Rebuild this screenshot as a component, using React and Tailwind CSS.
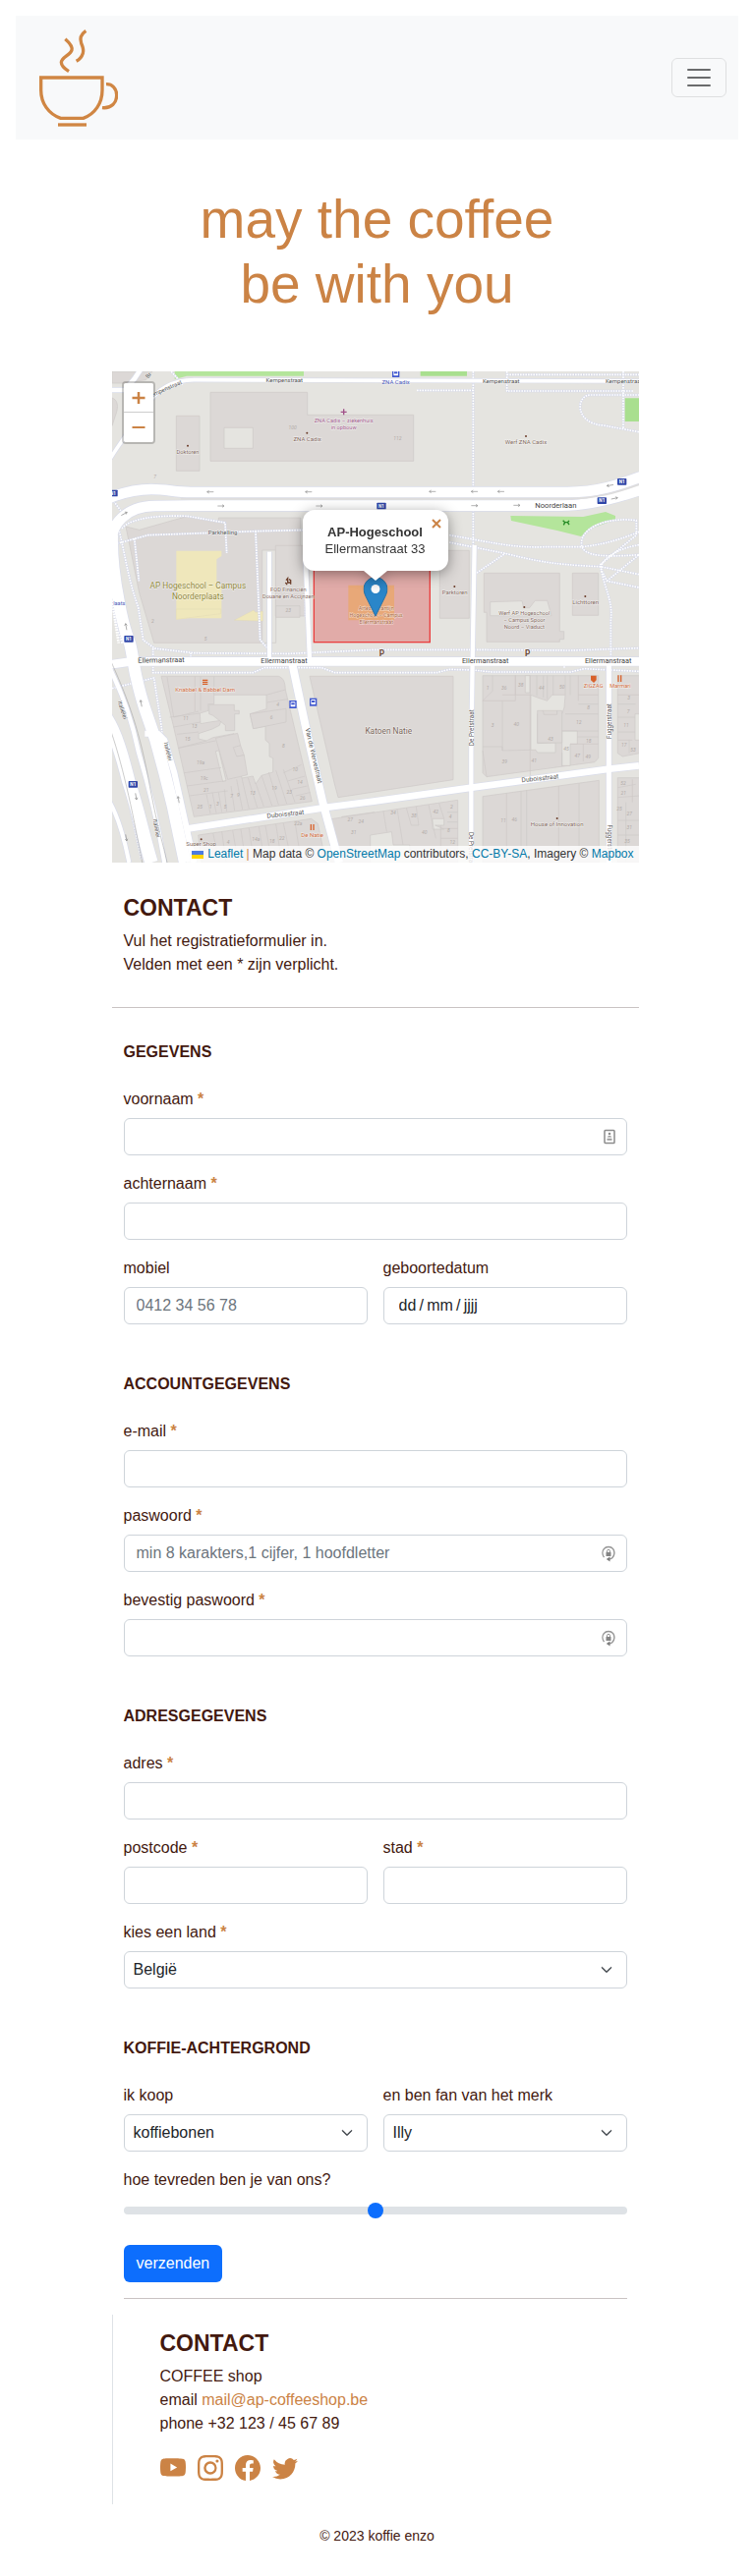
import React from "react";
import { BsYoutube, BsInstagram, BsFacebook, BsTwitter, BsChevronDown } from "react-icons/bs";

/* ---------- map drawing ---------- */

function Roads({ items }) {
  return (
    <g fill="none" strokeLinejoin="round">
      {items.map(([d, w]) => (
        <path key={"c" + d} d={d} stroke="#d9dcea" strokeWidth={w + 4} />
      ))}
      {items.map(([d, w]) => (
        <path key={d} d={d} stroke="#ffffff" strokeWidth={w} />
      ))}
    </g>
  );
}

function Paths({ items }) {
  return (
    <g fill="none" strokeLinejoin="round">
      {items.map((d) => (
        <path key={"b" + d} d={d} stroke="#d5d8e8" strokeWidth="7" />
      ))}
      {items.map((d) => (
        <path key={d} d={d} stroke="#ffffff" strokeWidth="5" strokeDasharray="5 3" />
      ))}
    </g>
  );
}

function Label({ x, y, size = 18, fill = "#836a5f", rotate = 0, anchor = "middle", weight = 400, children }) {
  return (
    <text
      x={x}
      y={y}
      fontSize={size}
      fill={fill}
      fontWeight={weight}
      textAnchor={anchor}
      transform={rotate ? `rotate(${rotate} ${x} ${y})` : undefined}
      stroke="#ffffff"
      strokeOpacity="0.6"
      strokeWidth="3"
      paintOrder="stroke"
    >
      {children}
    </text>
  );
}

function Badge({ x, y }) {
  return (
    <g>
      <rect x={x - 14} y={y - 10} width="28" height="20" rx="2" fill="#2f45a8" />
      <text x={x} y={y + 5} fontSize="14" fontWeight="700" fill="#ffffff" textAnchor="middle">N1</text>
    </g>
  );
}

function Arrow({ x, y, r = 0 }) {
  return (
    <path
      d="M-10 0H10M4 -4L10 0L4 4"
      transform={`translate(${x} ${y}) rotate(${r})`}
      fill="none"
      stroke="#8d8d8d"
      strokeWidth="2"
    />
  );
}

function Bus({ x, y }) {
  return (
    <g transform={`translate(${x} ${y})`}>
      <rect x="-11" y="-12" width="22" height="24" fill="#4159d0" />
      <rect x="-7" y="-8" width="14" height="15" rx="2" fill="#ffffff" />
      <rect x="-5" y="-5" width="10" height="6" fill="#4159d0" />
    </g>
  );
}

const houseNumbers = [
  [237, 334, "11"], [263, 358, "13"], [242, 398, "15"], [282, 470, "19a"], [293, 517, "19c"], [299, 553, "21"],
  [280, 605, "25"], [312, 603, "1"], [334, 596, "3"], [357, 604, "5"], [377, 572, "7"], [397, 567, "9"],
  [441, 562, "13"], [507, 548, "19"], [553, 560, "23"], [571, 490, "10"], [585, 528, "14"], [593, 576, "26"],
  [518, 292, "4"], [498, 332, "6"], [535, 417, "8"], [136, 38, "2"], [297, 92, "5"], [550, 5, "23"],
  [366, 712, "4"], [451, 704, "14a"], [500, 708, "18"], [530, 700, "22"], [580, 656, "22a"], [739, 642, "27"],
  [772, 650, "24"], [749, 682, "31"],
];

const houseNumbersEast = [
  [348, 242, "1"], [398, 242, "36"], [449, 232, "38"], [512, 240, "44"], [575, 238, "50"], [363, 356, "3"],
  [436, 352, "40"], [540, 398, "43"], [588, 426, "45"], [400, 466, "39"], [490, 463, "41"], [656, 302, "8"],
  [626, 347, "12"], [656, 402, "18"], [622, 447, "47"], [655, 450, "49"], [779, 270, "3"], [777, 312, "7"],
  [771, 356, "11"], [764, 416, "17"], [792, 430, "53"], [60, 622, "34"], [123, 632, "38"], [190, 620, "42"],
  [155, 682, "40"], [238, 604, "2"], [234, 635, "4"], [229, 676, "8"], [241, 713, "12"], [396, 645, "11"],
  [430, 643, "46"], [762, 532, "52"], [763, 562, "21"], [750, 610, "25"], [781, 625, "27"], [781, 668, "31"],
  [774, 708, "35"],
];

function MapTiles() {
  return (
    <svg
      viewBox="0 0 1608 1500"
      preserveAspectRatio="xMidYMid slice"
      className="block h-full w-full"
      fontFamily='Roboto, "Liberation Sans", sans-serif'
      role="img"
      aria-label="Kaart van de Ellermanstraat"
    >
      <rect width="1608" height="1500" fill="#e5e4e0" />

      {/* north west */}
      <g transform="translate(-12 -24)">
        <path d="M12 24H135L115 50L45 60H12Z" fill="#dcd8d6" stroke="#cdc9c7" strokeWidth="2" />
        <path d="M12 105C28 110 34 130 22 160L12 190Z" fill="#dcd8d6" stroke="#cdc9c7" strokeWidth="2" />
        <path d="M203 24H597V38L240 38L203 48Z" fill="#b4e59b" />
        <path d="M312 88H608V157H932V298H312Z" fill="#dcd8d6" stroke="#cdc9c7" strokeWidth="2" />
        <path d="M354 196H442V259H354Z" fill="#e5e4e0" stroke="#cdc9c7" strokeWidth="2" />
        <path d="M208 160H279V328H208Z" fill="#dcd8d6" stroke="#cdc9c7" strokeWidth="2" />
        <path d="M54 498L95 508L240 467L337 482V471H587V576H511V780L470 853H140L95 700Z" fill="#dcd8d6" stroke="#cdc9c7" strokeWidth="2" />
        <path d="M470 570H512V853H470Z" fill="#e5e4e0" stroke="#cdc9c7" strokeWidth="2" />
        <path d="M511 556H614V771H511Z" fill="#dcd8d6" stroke="#cdc9c7" strokeWidth="2" />
        <path d="M208 572H346V588L331 598V670L346 682V778H208Z" fill="#efe7bb" />
        <path d="M208 776H344V764L208 782Z" fill="#efe7bb" />
      </g>
      <g transform="translate(-12 726)">
        <path d="M208 0H344V14L208 31Z" fill="#efe7bb" stroke="#ddd5b4" />
        <path d="M385 34L444 3L450 10L472 6V36Z" fill="#efe7bb" stroke="#ddd5b4" />
        <path d="M512 -10H585V25H512Z" fill="#dcd8d6" stroke="#cdc9c7" strokeWidth="2" />
      </g>

      {/* north east */}
      <g transform="translate(798 -24)">
        <path d="M143 24H285V38H143Z M767 106H812V177H767Z" fill="#a9df8f" />
        <path d="M418 465L640 468L708 453L738 465V478L660 505L633 528L560 510L420 480Z" fill="#b4e59b" />
        <path d="M202 571H292V778H202Z M337 640H568V818H581V842H568V850H345V760H337Z M607 640H686V769H607Z" fill="#dcd8d6" stroke="#cdc9c7" strokeWidth="2" />
        <path d="M356 728L453 725L458 746H476L493 724H530L543 770H356Z" fill="#e5e4e0" stroke="#cdc9c7" strokeWidth="2" />
      </g>

      {/* south west blocks */}
      <g transform="translate(-12 726)" stroke="#cdc9c7" strokeWidth="2">
        <path d="M162 205H520C536 210 540 225 541 246L622 587L262 634L200 360Z" fill="#dcd8d6" />
        <path
          d="M323 262H483V305L433 320L443 365L480 358V400L492 410V450L503 455V498L468 508L450 534L442 510L408 516L392 450L415 446L404 416H385L384 380L320 392L300 402L276 396V380L318 366L340 355L345 340L310 345L282 350L280 318L306 310L305 290H323Z"
          fill="#e5e4e0"
        />
        <path d="M308 292H385V310H400V320H386V371H358V355L320 325L308 320Z M328 394L395 379L404 416L382 422L392 450L415 446L425 506L365 520Z M433 320L543 304V345L443 365Z" fill="#dcd8d6" />
        <path d="M328 434L338 432L360 524L350 527Z" fill="#e5e4e0" />
        <path
          d="M180 207L200 330L276 312M265 205V312M282 205V310M323 205V262M483 262L541 246M188 330L280 318M200 360L282 345M210 382L276 375M215 424L300 402M215 424L328 402M232 500L345 484M240 540L360 524M248 570L365 555M355 550L362 618M300 565L312 625M318 560L330 623M337 560L347 620M375 540L386 615M392 520L410 612M408 516L430 610M427 515L455 606M450 530L475 603M468 508L500 600M490 498L520 598M512 492L545 594M535 490L570 590M535 500L590 475M548 525L600 510M560 550L608 540M572 570L616 560M485 285L548 275"
          fill="none"
        />
        <path d="M615 205H1053V521L702 575L690 530Z" fill="#dcd8d6" />
        <path d="M275 690L620 640L640 655L665 774H285Z M713 634L812 620V774H745Z" fill="#dcd8d6" />
        <path d="M320 684L340 774M347 680L360 774M380 676L397 774M405 672L420 774M430 669L445 774M460 664L478 774M480 662L500 774M512 657L530 774M535 654L560 774M570 650L590 774M735 670L790 660M740 700L790 690M765 630L780 700" fill="none" />
      </g>

      {/* south east blocks */}
      <g transform="translate(798 726)" stroke="#cdc9c7" strokeWidth="2">
        <path d="M333 203H686V455L675 467L345 512L333 500Z" fill="#dcd8d6" />
        <path d="M480 262L500 270L530 280L545 262L585 262L582 300L575 320H560V310H517L500 320V410L555 408V438H500L495 430H480Z M575 372H622V412H600V478H575Z M463 203H477V255H463Z" fill="#e5e4e0" />
        <path d="M500 310H517L520 322H560V310H575V408H500Z" fill="#dcd8d6" />
        <path d="M363 203V250L333 280H433V203M393 280V432M333 420H393V432L478 430V512M478 430V262M393 262H478M433 262V203M478 203V262M498 203V265M518 203V270M530 203V275M548 203V262M585 203V262M600 203V262M625 203V280M585 320H686M575 372H686M600 412H686M625 262H686M625 290H686M622 390H686M640 412V465M333 432L345 512M575 438V480" fill="none" />
        <path d="M745 203H812V440L760 450L745 440Z" fill="#dcd8d6" />
        <path d="M745 262H812M745 290H800M745 330H800M745 375H800M745 400H790M780 400V440" fill="none" />
        <path d="M798 320H812V400H798Z" fill="#e5e4e0" />
        <path d="M333 572L688 523V774H333Z" fill="#dcd8d6" />
        <path d="M406 562V774M450 556V774M467 553V774M565 540V774M627 532V774" fill="none" />
        <path d="M-130 641L257 583V774H-130Z" fill="#dcd8d6" />
        <path d="M-10 690L55 680L60 720H110L115 774H-10Z M188 660H215V640H180V672H215Z" fill="#e5e4e0" />
        <path d="M30 617L40 680M72 611L90 720M100 607L115 660H138L130 603M168 597L190 700M200 593L215 640M225 620H257M225 650H257M205 670H257M205 700H257M205 660V774" fill="none" />
        <path d="M745 515H812V774H745Z" fill="#dcd8d6" />
        <path d="M745 545L800 535M745 575L812 570M770 590V774M745 645H812M745 690H812M790 520V590" fill="none" />
      </g>

      <Paths
        items={[
          "M216 40L180 0M1205 10H1608M1205 0V60H1590M930 58H1102M1102 0V530",
          "M1608 185L1500 165C1410 160 1415 72 1460 72H1608M1560 0V175",
          "M1029 500C1150 520 1220 540 1320 536H1430C1500 530 1560 510 1608 490",
          "M1029 522L1200 556C1280 575 1330 590 1490 596L1608 620",
          "M1608 560C1470 570 1420 560 1435 510C1450 470 1520 445 1600 455V500L1490 590C1500 660 1530 700 1522 760V884",
          "M1608 530C1540 540 1480 580 1495 610L1510 640L1608 660M1510 640L1608 560M1106 620L1200 556",
          "M0 530L110 500L438 488L605 484M30 480C60 440 180 440 230 442L345 462L350 555M438 488L452 820L478 850",
          "M20 480C40 560 50 640 80 720L95 820L130 846L250 860L540 862L800 850L1090 850L1400 852L1608 845",
          "M125 846V920H430L465 905H640L680 920H990L1030 910L1100 912L1160 918L1400 918L1440 908L1608 916",
          "M0 390L30 430M0 968L128 936L150 1080L160 1180M1380 905V880M0 1080L90 1490M605 484V420",
          "M240 860L240 900M30 830L10 760L0 700M68 510L82 640M590 700V750",
        ]}
      />

      <Roads
        items={[
          ["M-10 57H40L70 20L90 -10", 14],
          ["M-20 290C20 220 70 160 110 100C140 50 190 27 250 26L1608 30", 11],
          ["M480 551V884", 12],
          ["M590 560L603 884", 13],
          ["M1106 531L1100 884L1096 1160V1500", 13],
          ["M1516 890V1500", 15],
          ["M-10 900C20 960 60 1060 80 1160C110 1260 140 1380 160 1500", 13],
          ["M-10 1310C20 1360 40 1440 52 1500", 12],
          ["M100 1106H140L160 1126L190 1226L222 1370L250 1500", 18],
          ["M233 1396L658 1331L798 1313L1098 1271L1518 1214L1608 1204", 20],
          ["M548 884L593 1096L643 1316L693 1500", 24],
          ["M-10 896L60 886H1608", 26],
          ["M-20 1056C10 1100 30 1170 50 1250C80 1340 90 1400 120 1500", 40],
          ["M0 500C-2 580 8 640 20 700C30 760 42 800 54 830C62 860 66 900 73 930C82 970 90 1000 100 1030L133 1126L160 1226L185 1326L222 1500", 36],
          ["M-40 400C20 372 70 360 120 360C170 360 190 369 240 369H1390C1480 369 1540 350 1640 312", 32],
          ["M0 520C-4 470 40 412 130 411L240 410H1370C1450 410 1540 388 1640 352", 32],
        ]}
      />
      <path d="M210 389H1390C1480 389 1540 370 1608 346" fill="none" stroke="#dedddd" strokeWidth="5" />
      <path d="M0 700L20 830M10 690L32 830" fill="none" stroke="#ffffff" strokeWidth="8" strokeDasharray="5 3" />
      <path d="M-6 880C40 980 80 1080 110 1240S150 1420 168 1500M-10 1080C30 1190 60 1330 92 1500" fill="none" stroke="#9a9a9a" strokeWidth="1.5" />

      <Arrow x={300} y={368} r={180} />
      <Arrow x={600} y={368} r={180} />
      <Arrow x={978} y={367} r={180} />
      <Arrow x={1106} y={367} r={180} />
      <Arrow x={1187} y={367} r={180} />
      <Arrow x={1520} y={348} r={170} />
      <Arrow x={332} y={411} />
      <Arrow x={632} y={411} />
      <Arrow x={1106} y={410} />
      <Arrow x={1235} y={409} />
      <Arrow x={1533} y={388} r={-12} />
      <Arrow x={37} y={435} r={-28} />
      <Arrow x={43} y={780} r={-100} />
      <Arrow x={89} y={1014} r={-100} />
      <Arrow x={203} y={1308} r={-100} />
      <Arrow x={73} y={1298} r={80} />
      <Arrow x={43} y={1424} r={80} />
      <Badge x={3} y={372} />
      <Badge x={822} y={411} />
      <Badge x={1495} y={395} />
      <Badge x={1556} y={337} />
      <Badge x={51} y={817} />
      <Badge x={64} y={1261} />
      <Bus x={866} y={6} />
      <Bus x={552} y={1017} />
      <Bus x={614} y={1010} />

      {/* highlighted campus */}
      <rect x="616" y="560" width="354" height="267" fill="#dd5555" fillOpacity="0.4" stroke="#ea3e3e" strokeWidth="4" />
      <path d="M721 653H861V760H721Z" fill="#e8a878" />
      <g transform="translate(-12 726)" fontStyle="italic">
        {houseNumbers.map(([x, y, n]) => (
          <text key={x + "-" + y} x={x} y={y + 5} fontSize="15" fill="#b3aca9" textAnchor="middle">{n}</text>
        ))}
      </g>
      <g transform="translate(798 726)" fontStyle="italic">
        {houseNumbersEast.map(([x, y, n]) => (
          <text key={x + "-" + y} x={x} y={y + 5} fontSize="15" fill="#b3aca9" textAnchor="middle">{n}</text>
        ))}
      </g>
      <text x="551" y="178" fontSize="15" fontStyle="italic" fill="#b3aca9" textAnchor="middle">100</text>
      <text x="871" y="210" fontSize="15" fontStyle="italic" fill="#b3aca9" textAnchor="middle">112</text>
      <text x="131" y="328" fontSize="15" fontStyle="italic" fill="#b3aca9" textAnchor="middle">7</text>

      {/* labels */}
      <Label x={526} y={33} fill="#4f4f4f">Kempenstraat</Label>
      <Label x={1187} y={35} fill="#4f4f4f">Kempenstraat</Label>
      <Label x={1562} y={35} fill="#4f4f4f">Kempenstraat</Label>
      <Label x={168} y={58} fill="#4f4f4f" rotate={-24}>empenstraat</Label>
      <Label x={116} y={16} fill="#4f4f4f" rotate={-50}>Br</Label>
      <Label x={866} y={39} fill="#4a58b8">ZNA Cadix</Label>
      <path d="M698 124H716M707 115V133" stroke="#a05088" strokeWidth="4" />
      <Label x={707} y={156} fill="#a05a8c" size={17}>ZNA Cadix – ziekenhuis</Label>
      <Label x={707} y={177} fill="#a05a8c" size={17}>in opbouw</Label>
      <circle cx="595" cy="188" r="3" fill="#6b3d2a" />
      <Label x={596} y={214}>ZNA Cadix</Label>
      <circle cx="231" cy="227" r="3" fill="#6b3d2a" />
      <Label x={231} y={251} size={17}>Doktoren</Label>
      <circle cx="1263" cy="198" r="3" fill="#6b3d2a" />
      <Label x={1263} y={222}>Werf ZNA Cadix</Label>
      <Label x={1354} y={416} fill="#454545" size={23}>Noorderlaan</Label>
      <path d="M1376 455L1382 461H1390L1395 456M1382 461L1378 469M1390 461L1395 468" fill="none" stroke="#238a23" strokeWidth="4" />
      <Label x={338} y={499} fill="#555555">Parkhelling</Label>
      <Label x={262} y={662} fill="#8f8637" size={25}>AP Hogeschool – Campus</Label>
      <Label x={262} y={695} fill="#8f8637" size={25}>Noorderplaats</Label>
      <Label x={22} y={714} fill="#4a58b8" size={17}>laats</Label>
      <path d="M531 638L536 632V645H545M529 645L534 650M540 635L545 638V650M531 650H535" stroke="#6b3d2a" strokeWidth="4" fill="none" />
      <Label x={538} y={673} size={17}>FOD Financiën</Label>
      <Label x={538} y={694} size={17}>Douane en Accijnzen</Label>
      <Label x={806} y={728} fill="#a8683f" size={16}>Artesis Plantijn</Label>
      <Label x={806} y={750} fill="#a8683f" size={16}>Hogeschool – Campus</Label>
      <Label x={806} y={771} fill="#a8683f" size={16}>Ellermanstraat</Label>
      <circle cx="1045" cy="657" r="3" fill="#6b3d2a" />
      <Label x={1046} y={681}>Parktoren</Label>
      <circle cx="1258" cy="720" r="3" fill="#6b3d2a" />
      <Label x={1258} y={744} size={17}>Werf AP Hogeschool</Label>
      <Label x={1258} y={765} size={17}>– Campus Spoor</Label>
      <Label x={1258} y={787} size={17}>Noord – Viaduct</Label>
      <circle cx="1444" cy="687" r="3" fill="#6b3d2a" />
      <Label x={1445} y={710}>Lichttoren</Label>
      <Label x={823} y={869} fill="#6b4a38" size={25} weight={700}>P</Label>
      <Label x={1268} y={869} fill="#6b4a38" size={25} weight={700}>P</Label>
      <Label x={150} y={889} fill="#454545" size={22} rotate={-1}>Ellermanstraat</Label>
      <Label x={525} y={892} fill="#454545" size={22}>Ellermanstraat</Label>
      <Label x={1139} y={890} fill="#454545" size={22}>Ellermanstraat</Label>
      <Label x={1514} y={890} fill="#454545" size={22}>Ellermanstraat</Label>
      <Label x={844} y={1106} fill="#7b675c" size={25}>Katoen Natie</Label>
      <path d="M276 941H292V945H276ZM276 947H292V951H276ZM276 953H292V957H276Z" fill="#d8622b" />
      <Label x={284} y={978} fill="#cf6a3b">Knabbel &amp; Babbel Dam</Label>
      <path d="M1463 931H1476V942L1470 948L1463 942ZM1545 928V948M1553 928V948" fill="#d8622b" stroke="#d8622b" strokeWidth="4" />
      <Label x={1469} y={967} fill="#cf6a3b" size={17}>ZIGZAG</Label>
      <Label x={1551} y={967} fill="#cf6a3b" size={17}>Marmari</Label>
      <path d="M607 1383V1401M615 1383V1401" stroke="#d8622b" strokeWidth="4" />
      <Label x={611} y={1421} fill="#cf6a3b">De Natie</Label>
      <circle cx="272" cy="1429" r="3" fill="#6b3d2a" />
      <Label x={272} y={1450}>Super Shop</Label>
      <Label x={609} y={1175} fill="#555555" size={20} rotate={77}>Van de Wervestraat</Label>
      <Label x={530} y={1358} fill="#555555" size={20} rotate={-6}>Duboisstraat</Label>
      <Label x={1307} y={1249} fill="#555555" size={20} rotate={-6}>Duboisstraat</Label>
      <Label x={1103} y={1088} fill="#555555" size={19} rotate={-90}>De Pretstraat</Label>
      <Label x={1090} y={1462} fill="#555555" size={19} rotate={90}>De Pretstraat</Label>
      <Label x={1523} y={1068} fill="#555555" size={19} rotate={-90}>Fuggerstraat</Label>
      <Label x={1511} y={1438} fill="#555555" size={19} rotate={90}>Fuggerstraat</Label>
      <Label x={26} y={1036} fill="#555555" rotate={72}>Italiëlei</Label>
      <Label x={165} y={1162} fill="#555555" rotate={76}>Italiëlei</Label>
      <Label x={130} y={1396} fill="#555555" rotate={80}>Italiëlei</Label>
      <circle cx="1358" cy="1365" r="3" fill="#6b3d2a" />
      <Label x={1358} y={1390}>House of Innovation</Label>
    </svg>
  );
}

function MarkerPin() {
  return (
    <svg viewBox="0 0 25 41" className="h-[41px] w-[25px]" aria-hidden="true">
      <path
        d="M12.500 0.600C6 0.600 0.600 5.900 0.600 12.500c0 3.100 1 5.600 2.300 8.200L12.500 40l9.600-19.300c1.300-2.600 2.300-5.100 2.300-8.200C24.400 5.900 19 0.600 12.500 0.600z"
        fill="#2a86c9"
        stroke="#2470a8"
      />
      <circle cx="12.500" cy="12.500" r="4.500" fill="#ffffff" />
    </svg>
  );
}

function MapPanel() {
  const link = "text-[#0078a8]";
  return (
    <section className="relative h-[500px] w-full overflow-hidden" aria-label="Kaart">
      <MapTiles />
      <div className="absolute left-[10px] top-[10px] flex flex-col rounded border-2 border-black/20 bg-clip-padding">
        <button type="button" aria-label="Inzoomen" className="flex h-[30px] w-[30px] items-center justify-center rounded-t-xs border-b border-[#cccccc] bg-white text-[#cb8345]">
          <svg viewBox="0 0 14 14" className="size-[14px]" aria-hidden="true"><path d="M0.500 7H13.500M7 1V13" stroke="currentColor" strokeWidth="2.500" /></svg>
        </button>
        <button type="button" aria-label="Uitzoomen" className="flex h-[30px] w-[30px] items-center justify-center rounded-b-xs bg-white text-[#cb8345]">
          <svg viewBox="0 0 14 14" className="size-[14px]" aria-hidden="true"><path d="M0.500 7H13.500" stroke="currentColor" strokeWidth="2" /></svg>
        </button>
      </div>
      <div className="absolute left-1/2 top-[209px] -translate-x-1/2">
        <MarkerPin />
      </div>
      <div className="absolute left-1/2 top-[141px] w-[148px] -translate-x-1/2 drop-shadow-[0_3px_7px_rgba(0,0,0,0.4)]">
        <div className="relative rounded-xl bg-white py-[14px] text-center text-[13px] leading-[17px] text-[#333333]">
          <strong className="block font-bold">AP-Hogeschool</strong>
          <span className="block">Ellermanstraat 33</span>
          <button type="button" aria-label="Sluiten" className="absolute right-[7px] top-[9px] text-[#cb8345]">
            <svg viewBox="0 0 10 10" className="size-[10px]" aria-hidden="true"><path d="M1 1L9 9M9 1L1 9" stroke="currentColor" strokeWidth="2" /></svg>
          </button>
        </div>
        <svg viewBox="0 0 24 10" className="mx-auto block h-[10px] w-[24px]" aria-hidden="true"><path d="M0 0H24L12 10Z" fill="#ffffff" /></svg>
      </div>
      <div className="absolute bottom-0 right-0 flex h-[17px] items-center gap-1 whitespace-nowrap bg-white/80 px-[5px] text-[12px] leading-[17px] text-[#333333]">
        <svg viewBox="0 0 12 8" className="h-[8px] w-[12px]" aria-hidden="true"><path d="M0 0H12V4H0Z" fill="#4c7be1" /><path d="M0 4H12V8H0Z" fill="#ffd500" /></svg>
        <span>
          <a href="#leaflet" className={link}>Leaflet</a> <span className="text-[#cb8345]">|</span> Map data © <a href="#osm" className={link}>OpenStreetMap</a> contributors, <a href="#license" className={link}>CC-BY-SA</a>, Imagery © <a href="#mapbox" className={link}>Mapbox</a>
        </span>
      </div>
    </section>
  );
}

/* ---------- form ---------- */

const control = "block h-[38px] w-full appearance-none rounded-md border border-[#ced4da] bg-white text-base leading-6 text-[#212529] placeholder:text-[#6c757d] placeholder:opacity-100";

function IdCardIcon() {
  return (
    <svg viewBox="0 0 12 16" className="h-[16px] w-[12px]" aria-hidden="true">
      <rect x="1" y="1.500" width="10" height="13" rx="0.800" fill="none" stroke="#8c8c8c" strokeWidth="1.500" />
      <circle cx="6" cy="5" r="1.300" fill="#8c8c8c" />
      <path d="M3.800 8.500C3.800 6.500 8.200 6.500 8.200 8.500ZM3.500 9.800H8.500V11.800H3.500Z" fill="#9c9c9c" />
    </svg>
  );
}

function KeyLockIcon() {
  return (
    <svg viewBox="0 0 14 17" className="h-[17px] w-[14px]" aria-hidden="true">
      <path d="M2.500 12.200C0.500 9.500 0.500 5.800 2.300 3.600C4.600 0.700 9.400 0.700 11.700 3.600C13.600 6.200 13.300 10.500 10.800 12.700C10 13.400 9 13.900 7.500 14" fill="none" stroke="#949494" strokeWidth="1.400" />
      <path d="M8.500 11.500L4.800 14L8.500 16.600Z" fill="#7c7c7c" />
      <rect x="4.500" y="7" width="5" height="4" fill="#858585" />
      <path d="M5.500 7V5.800a1.500 1.500 0 0 1 3 0V7" fill="none" stroke="#949494" strokeWidth="1" />
    </svg>
  );
}

function Field({ id, label, required, children }) {
  return (
    <div className="flex min-w-0 flex-1 flex-col gap-[7px]">
      <label htmlFor={id} className="pt-px leading-6">
        {label}
        {required && <span className="font-bold text-[#cb8345]"> *</span>}
      </label>
      {children}
    </div>
  );
}

function TextField({ id, label, required, type = "text", placeholder, icon }) {
  return (
    <Field id={id} label={label} required={required}>
      <div className="relative">
        <input id={id} name={id} type={type} placeholder={placeholder} className={control + " px-3"} />
        {icon && <span className="pointer-events-none absolute inset-y-0 right-3 flex items-center">{icon}</span>}
      </div>
    </Field>
  );
}

function SelectField({ id, label, required, options }) {
  return (
    <Field id={id} label={label} required={required}>
      <div className="relative">
        <select id={id} name={id} className={control + " pl-[9px] pr-9"}>
          {options.map((o) => (
            <option key={o}>{o}</option>
          ))}
        </select>
        <BsChevronDown className="pointer-events-none absolute right-[15px] top-[13px] size-3 stroke-1 text-[#343a40]" aria-hidden="true" />
      </div>
    </Field>
  );
}

function Group({ title, children }) {
  return (
    <section className="flex flex-col gap-4">
      <h3 className="mb-[7px] pt-px text-base font-bold leading-6">{title}</h3>
      {children}
    </section>
  );
}

function CoffeeLogo() {
  return (
    <svg viewBox="30 27 240 300" className="h-[100px] w-[80px]" fill="none" stroke="#d08643" strokeWidth="10" aria-hidden="true">
      <path d="M35 177H222V215C222 255 200 288 164 301H95C58 288 35 255 35 215Z" />
      <path d="M87 321H174" />
      <path d="M234 197C252 196 266 210 266 230C266 254 250 272 222 269" />
      <path d="M109 59C124 72 132 82 129 93C125 108 98 115 97 130C97 140 105 149 120 158" />
      <path d="M172 34C155 46 153 58 158 72C165 88 166 94 163 103C160 113 154 121 143 127" />
    </svg>
  );
}

const social = [
  ["YouTube", BsYoutube],
  ["Instagram", BsInstagram],
  ["Facebook", BsFacebook],
  ["Twitter", BsTwitter],
];

export default function App() {
  return (
    <div className='bg-white p-4 pb-7 font-["Liberation_Sans",Arial,sans-serif] text-base text-[#43190f]'>
      <nav className="flex items-center justify-between bg-[#f8f9fa] py-[13px] pl-6 pr-3">
        <a href="#home" aria-label="Home"><CoffeeLogo /></a>
        <button type="button" aria-label="Menu" className="flex h-10 w-14 items-center justify-center rounded-md border border-black/10">
          <svg viewBox="0 0 30 30" className="size-[30px]" aria-hidden="true"><path d="M4 7H26M4 15H26M4 23H26" stroke="#6a6b6c" strokeWidth="2" strokeLinecap="round" /></svg>
        </button>
      </nav>

      <h1 className="mb-14 mt-12 text-center text-[55px] leading-[66px] text-[#cb8345]">
        may the coffee<br />be with you
      </h1>

      <main className="mx-auto max-w-[540px] pr-1">
        <MapPanel />

        <header className="px-3 pb-[31px] pt-[33px]">
          <h2 className="mb-2 text-[23px] font-bold leading-[27px]">CONTACT</h2>
          <p className="leading-6">Vul het registratieformulier in.<br />Velden met een * zijn verplicht.</p>
        </header>
        <hr className="border-[#c9c3c3]" />

        <form className="flex flex-col gap-12 px-3 pt-8" onSubmit={(e) => e.preventDefault()}>
          <Group title="GEGEVENS">
            <TextField id="voornaam" label="voornaam" required icon={<IdCardIcon />} />
            <TextField id="achternaam" label="achternaam" required />
            <div className="flex gap-4">
              <TextField id="mobiel" label="mobiel" type="tel" placeholder="0412 34 56 78" />
              <Field id="geboortedatum" label="geboortedatum">
                <input id="geboortedatum" name="geboortedatum" type="text" defaultValue={"dd\u2009/\u2009mm\u2009/\u2009jjjj"} className={control + " px-[15px]"} />
              </Field>
            </div>
          </Group>

          <Group title="ACCOUNTGEGEVENS">
            <TextField id="email" label="e-mail" type="email" required />
            <TextField id="paswoord" label="paswoord" type="password" required placeholder="min 8 karakters,1 cijfer, 1 hoofdletter" icon={<KeyLockIcon />} />
            <TextField id="bevestig" label="bevestig paswoord" type="password" required icon={<KeyLockIcon />} />
          </Group>

          <Group title="ADRESGEGEVENS">
            <TextField id="adres" label="adres" required />
            <div className="flex gap-4">
              <TextField id="postcode" label="postcode" required />
              <TextField id="stad" label="stad" required />
            </div>
            <SelectField id="land" label="kies een land" required options={["België"]} />
          </Group>

          <Group title="KOFFIE-ACHTERGROND">
            <div className="flex gap-4">
              <SelectField id="koop" label="ik koop" options={["koffiebonen"]} />
              <SelectField id="merk" label="en ben fan van het merk" options={["Illy"]} />
            </div>
            <Field id="tevreden" label="hoe tevreden ben je van ons?">
              <input
                id="tevreden"
                name="tevreden"
                type="range"
                min="0"
                max="10"
                defaultValue="5"
                className="h-6 w-full appearance-none bg-transparent [&::-webkit-slider-runnable-track]:h-2 [&::-webkit-slider-runnable-track]:rounded-full [&::-webkit-slider-runnable-track]:bg-[#dee2e6] [&::-webkit-slider-thumb]:-mt-1 [&::-webkit-slider-thumb]:size-4 [&::-webkit-slider-thumb]:appearance-none [&::-webkit-slider-thumb]:rounded-full [&::-webkit-slider-thumb]:bg-[#0d6efd]"
              />
            </Field>
            <button type="submit" className="mt-[7px] h-[38px] self-start rounded-md bg-[#0d6efd] px-[13px] text-white">verzenden</button>
            <hr className="border-[#c9c3c3]" />
          </Group>
        </form>

        <section className="mt-4 border-l border-[#dee2e6] pb-6 pl-12 pt-4">
          <h2 className="mb-2 text-[23px] font-bold leading-[27px]">CONTACT</h2>
          <address className="not-italic leading-6">
            COFFEE shop<br />
            email <a href="mailto:mail@ap-coffeeshop.be" className="text-[#cb8345]">mail@ap-coffeeshop.be</a><br />
            phone +32 123 / 45 67 89
          </address>
          <ul className="mt-5 flex gap-3">
            {social.map(([name, Icon]) => (
              <li key={name}>
                <a href={"#" + name.toLowerCase()} aria-label={name} className="block text-[#cb8345]"><Icon className="block size-[26px]" /></a>
              </li>
            ))}
          </ul>
        </section>
      </main>

      <footer className="mt-[22px] text-center text-sm leading-[21px]">© 2023 koffie enzo</footer>
    </div>
  );
}
